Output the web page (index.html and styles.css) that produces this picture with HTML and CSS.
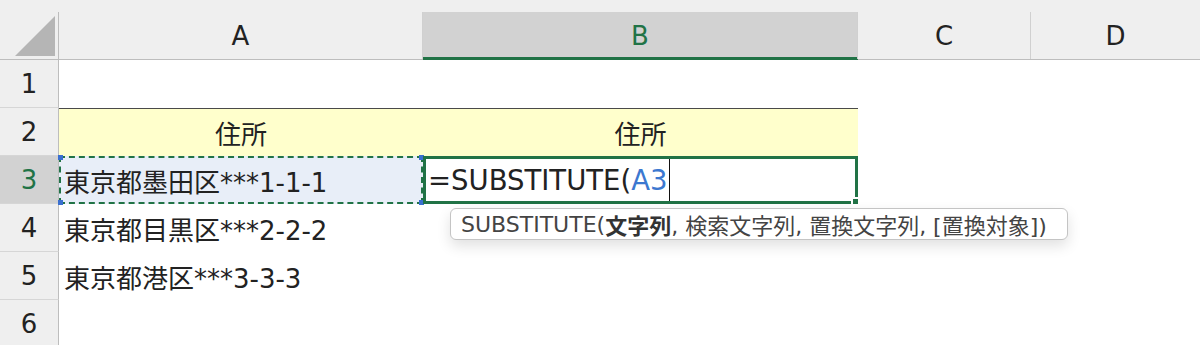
FILE: index.html
```html
<!DOCTYPE html>
<html lang="ja">
<head>
  <meta charset="UTF-8">
  <meta name="viewport" content="width=device-width, initial-scale=1.0">
  <title>SUBSTITUTE</title>
  <link rel="stylesheet" href="styles.css">
</head>
<body>

  <div class="sheet">
    <div class="corner"><div class="corner-inner"><span class="tri"></span></div></div>
    <div class="col-head"><div class="col-label">A</div></div>
    <div class="col-head active"><div class="col-label">B</div></div>
    <div class="col-head"><div class="col-label">C</div></div>
    <div class="col-head"><div class="col-label last">D</div></div>

    <div class="row-head">1</div>
    <div class="cell"></div><div class="cell"></div><div class="cell"></div><div class="cell"></div>

    <div class="row-head">2</div>
    <div class="cell title">住所</div>
    <div class="cell title">住所</div>
    <div class="cell"></div><div class="cell"></div>

    <div class="row-head active">3</div>
    <div class="cell ref">
      東京都墨田区***1-1-1
      <span class="knob tl"></span><span class="knob tr"></span>
      <span class="knob bl"></span><span class="knob br"></span>
    </div>
    <div class="cell editing">
      <span class="formula">=SUBSTITUTE(<span class="arg">A3</span></span><span class="caret"></span>
      <span class="fill-handle"></span>
    </div>
    <div class="cell"></div><div class="cell"></div>

    <div class="row-head">4</div>
    <div class="cell">東京都目黒区***2-2-2</div>
    <div class="cell"></div><div class="cell"></div><div class="cell"></div>

    <div class="row-head">5</div>
    <div class="cell">東京都港区***3-3-3</div>
    <div class="cell"></div><div class="cell"></div><div class="cell"></div>

    <div class="row-head">6</div>
    <div class="cell"></div><div class="cell"></div><div class="cell"></div><div class="cell"></div>

    <div class="tooltip">SUBSTITUTE(<b>文字列</b>, 検索文字列, 置換文字列, [置換対象])</div>
  </div>

</body>
</html>
```

FILE: styles.css
```css
:root {
  --verde: #217346;
  --cabecalho: #efefef;
  --ativo: #d2d2d2;
  --linha: #d6d6d6;
}

* {
  box-sizing: border-box;
}

body {
  margin: 0;
  background: white;
  font-family: "DejaVu Sans", "Noto Sans CJK JP", sans-serif;
  color: #222;
  overflow: hidden;
}

.sheet {
  position: relative;
  display: grid;
  grid-template-columns: 59px 364px 435px 173px 169px;
  grid-template-rows: 60px repeat(6, 48px);
  width: 1200px;
  height: 345px;
  overflow: hidden;
}

/* cabeçalhos */

.corner,
.col-head {
  background: var(--cabecalho);
  padding-top: 12px;
  border-bottom: 1px solid #bdbdbd;
}

.corner-inner {
  height: 100%;
  border-right: 1px solid #bdbdbd;
  position: relative;
}

.tri {
  position: absolute;
  left: 15px;
  top: 4px;
  width: 40px;
  height: 40px;
  background: #b5b5b5;
  clip-path: polygon(100% 0, 100% 100%, 0 100%);
}

.col-label {
  height: 100%;
  display: flex;
  align-items: center;
  justify-content: center;
  font-size: 26px;
  border-right: 1px solid #d0d0d0;
}

.col-label.last {
  border-right: none;
}

.col-head.active {
  border-bottom-color: var(--verde);
}

.col-head.active .col-label {
  background: var(--ativo);
  color: var(--verde);
  box-shadow: inset 0 -2px 0 var(--verde);
}

.row-head {
  background: var(--cabecalho);
  border-right: 1px solid #bdbdbd;
  border-bottom: 1px solid var(--linha);
  display: flex;
  align-items: center;
  justify-content: center;
  font-size: 26px;
}

.row-head.active {
  background: var(--ativo);
  color: var(--verde);
}

/* células */

.cell {
  position: relative;
  display: flex;
  align-items: center;
  padding-left: 5px;
  font-size: 26px;
  white-space: nowrap;
}

.cell.title {
  justify-content: center;
  padding-left: 0;
  background: #ffffcc;
  box-shadow: inset 0 1px 0 #4a4a4a;
}

.cell.ref {
  background: #e8eef8;
  border: 2px dashed var(--verde);
  padding-left: 3px;
}

.knob {
  position: absolute;
  width: 5px;
  height: 5px;
  background: #3a6fd0;
}

.knob.tl { left: -3px; top: -3px; }
.knob.tr { right: -3px; top: -3px; }
.knob.bl { left: -3px; bottom: -3px; }
.knob.br { right: -3px; bottom: -3px; }

.cell.editing {
  border: 3px solid var(--verde);
  padding-left: 2px;
}

.formula {
  font-size: 27.5px;
}

.arg {
  color: #3c78d0;
}

.caret {
  align-self: stretch;
  width: 1px;
  background: #111;
  margin-left: 1px;
}

.fill-handle {
  position: absolute;
  right: -3px;
  bottom: -3px;
  width: 7px;
  height: 7px;
  background: var(--verde);
  border-left: 2px solid white;
  border-top: 2px solid white;
}

/* dica da fórmula */

.tooltip {
  position: absolute;
  left: 450px;
  top: 208px;
  width: 618px;
  height: 32px;
  padding-left: 10px;
  display: flex;
  align-items: center;
  background: white;
  border: 1px solid #c4c4c4;
  border-radius: 6px;
  box-shadow: 0 6px 14px rgba(0, 0, 0, 0.12);
  font-size: 22px;
  color: #444;
  white-space: nowrap;
}

.tooltip b {
  color: #333;
}
```
